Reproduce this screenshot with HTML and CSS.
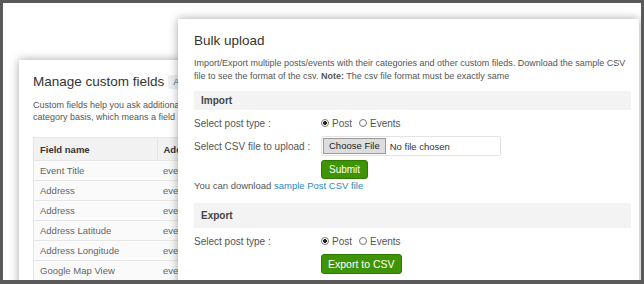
FILE: index.html
```html
<!DOCTYPE html>
<html lang="en">
<head>
    <meta charset="UTF-8">
    <title>Bulk upload</title>
    <link rel="stylesheet" href="styles.css">
</head>
<body>
    <div class="frame">

        <!-- window behind: custom fields -->
        <div class="window fields-window">
            <div class="title-row">
                <h2>Manage custom fields</h2>
                <a class="add-btn" href="#">Add new</a>
            </div>
            <p class="intro">Custom fields help you ask additional information from your users on a per<br>category basis, which means a field may be shown for some categories only</p>
            <table class="fields-table">
                <tr><th>Field name</th><th>Add to</th></tr>
                <tr><td>Event Title</td><td>event</td></tr>
                <tr><td>Address</td><td>event</td></tr>
                <tr><td>Address</td><td>event</td></tr>
                <tr><td>Address Latitude</td><td>event</td></tr>
                <tr><td>Address Longitude</td><td>event</td></tr>
                <tr><td>Google Map View</td><td>event</td></tr>
            </table>
        </div>

        <!-- window in front: bulk upload -->
        <div class="window bulk-window">
            <h2>Bulk upload</h2>
            <p class="intro">Import/Export multiple posts/events with their categories and other custom fileds. Download the sample CSV file to see the format of the csv. <b>Note:</b> The csv file format must be exactly same</p>

            <div class="section-bar import-bar">Import</div>
            <div class="form-row">
                <span class="label">Select post type :</span>
                <label class="radio"><input type="radio" name="imp" checked> Post</label>
                <label class="radio"><input type="radio" name="imp"> Events</label>
            </div>
            <div class="form-row file-row">
                <span class="label">Select CSV file to upload :</span>
                <div class="file-box">
                    <span class="choose-btn">Choose File</span>
                    <span class="file-name">No file chosen</span>
                </div>
            </div>
            <div class="form-row btn-row">
                <span class="label"></span>
                <button class="green-btn" type="button">Submit</button>
            </div>
            <p class="download">You can download <a href="#">sample Post CSV file</a></p>

            <div class="section-bar export-bar">Export</div>
            <div class="form-row">
                <span class="label">Select post type :</span>
                <label class="radio"><input type="radio" name="exp" checked> Post</label>
                <label class="radio"><input type="radio" name="exp"> Events</label>
            </div>
            <div class="form-row btn-row export-row">
                <span class="label"></span>
                <button class="green-btn" type="button">Export to CSV</button>
            </div>
        </div>

    </div>
</body>
</html>
```

FILE: styles.css
```css
body {
    margin: 0;
    font-family: 'Liberation Sans', Arial, sans-serif;
    color: #555;
}

.frame {
    position: relative;
    width: 644px;
    height: 284px;
    box-sizing: border-box;
    border: 3px solid #5a5a5a;
    border-bottom-width: 4px;
    background-color: #fff;
    overflow: hidden;
}

.window {
    position: absolute;
    background-color: #fff;
    box-shadow: 0 0 9px rgba(0, 0, 0, 0.35);
    box-sizing: border-box;
}

h2 {
    margin: 0;
    font-size: 13.5px;
    line-height: 16px;
    font-weight: normal;
    color: #333;
}

.intro {
    margin: 0;
    font-size: 9px;
    line-height: 13px;
}

/* custom fields window, mostly hidden behind the bulk window */

.fields-window {
    left: 16px;
    top: 57px;
    width: 172px;
    height: 260px;
    padding: 14px 0 0 14px;
    overflow: hidden;
}

.title-row {
    display: flex;
    align-items: center;
    gap: 4px;
    white-space: nowrap;
}

.add-btn {
    background-color: #efefef;
    color: #2a7fb8;
    font-size: 9px;
    line-height: 14px;
    padding: 0 5px;
    text-decoration: none;
    border-radius: 2px;
}

.fields-window .intro {
    margin-top: 10px;
    line-height: 11.5px;
    white-space: nowrap;
}

.fields-table {
    margin-top: 14px;
    width: 300px;
    border-collapse: collapse;
    font-size: 9.5px;
    color: #666;
    white-space: nowrap;
}

.fields-table th,
.fields-table td {
    border-top: 1px solid #e6e6e6;
    text-align: left;
    padding: 0 6px;
    height: 19px;
}

.fields-table th {
    height: 22px;
    background-color: #f2f2f2;
    color: #333;
    font-weight: bold;
    border-left: 1px solid #e6e6e6;
}

.fields-table td {
    background-color: #fafafa;
}

.fields-table td:first-child {
    border-left: 1px solid #e6e6e6;
    width: 111px;
}

/* bulk upload window */

.bulk-window {
    left: 175px;
    top: 16px;
    width: 461px;
    height: 290px;
    padding: 14px 8px 0 16px;
}

.bulk-window h2 {
    margin-bottom: 8px;
}

.section-bar {
    background-color: #f3f3f3;
    color: #444;
    font-size: 10px;
    font-weight: bold;
    padding-left: 7px;
}

.import-bar {
    margin-top: 8px;
    height: 19px;
    line-height: 19px;
}

.export-bar {
    margin-top: 11px;
    height: 25px;
    line-height: 25px;
}

.form-row {
    display: flex;
    align-items: center;
    font-size: 10px;
    height: 16px;
    margin-top: 5px;
}

.label {
    width: 127px;
    flex-shrink: 0;
}

.radio {
    display: flex;
    align-items: center;
    gap: 3px;
    margin-right: 7px;
}

.radio input {
    appearance: none;
    margin: 0;
    width: 8px;
    height: 8px;
    border: 1px solid #777;
    border-radius: 50%;
    background-color: #fff;
    box-sizing: border-box;
}

.radio input:checked {
    background: radial-gradient(circle, #222 0 1.6px, #fff 2.2px);
}

.file-row {
    height: 20px;
    margin-top: 5px;
}

.file-box {
    display: flex;
    align-items: center;
    width: 180px;
    height: 20px;
    box-sizing: border-box;
    border: 1px solid #e2e2e2;
    border-radius: 2px;
    padding-left: 1px;
}

.choose-btn {
    background-color: #ddd;
    border: 1px solid #999;
    color: #222;
    font-size: 9.5px;
    line-height: 14px;
    padding: 0 5px;
}

.file-name {
    margin-left: 4px;
    color: #333;
    font-size: 9.5px;
}

.btn-row {
    height: 19px;
    margin-top: 4px;
}

.green-btn {
    font-family: 'Liberation Sans', Arial, sans-serif;
    font-size: 10px;
    color: #fff;
    background-color: #3f9406;
    border: 1px solid #2f7a00;
    border-radius: 3px;
    height: 19px;
    padding: 0 7px;
}

.export-row {
    height: 20px;
    margin-top: 5px;
}

.export-row .green-btn {
    height: 20px;
    font-size: 10.5px;
    padding: 0 6px;
}

.download {
    margin: 1px 0 0 0;
    font-size: 9.5px;
    line-height: 12px;
}

.download a {
    color: #2a8bc4;
    text-decoration: none;
}
```
